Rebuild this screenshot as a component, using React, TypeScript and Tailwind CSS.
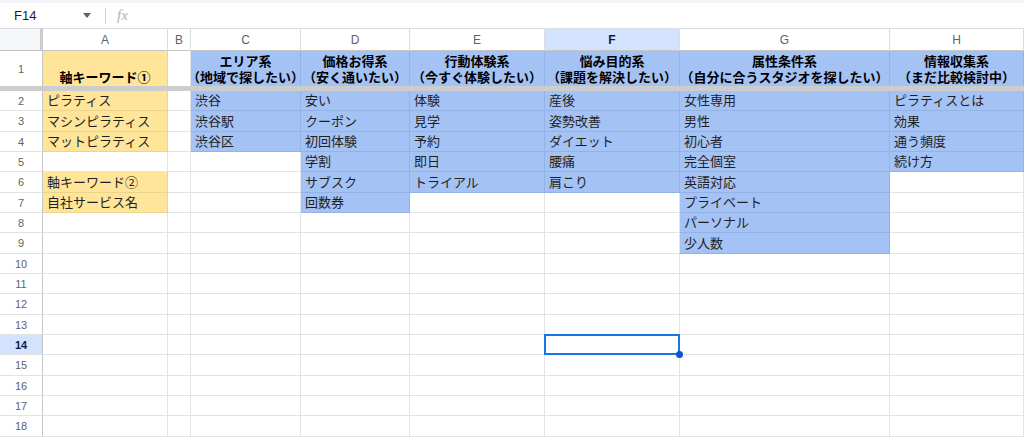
import React from "react";

type Fill = "none" | "yellow" | "blue";

const COLS = ["A", "B", "C", "D", "E", "F", "G", "H"];

// 1行目（見出し）
const HEAD: { lines: string[]; fill: Fill }[] = [
  { lines: ["軸キーワード①"], fill: "yellow" },
  { lines: [], fill: "none" },
  { lines: ["エリア系", "（地域で探したい）"], fill: "blue" },
  { lines: ["価格お得系", "（安く通いたい）"], fill: "blue" },
  { lines: ["行動体験系", "（今すぐ体験したい）"], fill: "blue" },
  { lines: ["悩み目的系", "（課題を解決したい）"], fill: "blue" },
  { lines: ["属性条件系", "（自分に合うスタジオを探したい）"], fill: "blue" },
  { lines: ["情報収集系", "（まだ比較検討中）"], fill: "blue" },
];

// 2行目以降の列データ
const DATA: string[][] = [
  ["ピラティス", "マシンピラティス", "マットピラティス", "", "軸キーワード②", "自社サービス名"],
  [],
  ["渋谷", "渋谷駅", "渋谷区"],
  ["安い", "クーポン", "初回体験", "学割", "サブスク", "回数券"],
  ["体験", "見学", "予約", "即日", "トライアル"],
  ["産後", "姿勢改善", "ダイエット", "腰痛", "肩こり"],
  ["女性専用", "男性", "初心者", "完全個室", "英語対応", "プライベート", "パーソナル", "少人数"],
  ["ピラティスとは", "効果", "通う頻度", "続け方"],
];

const ROW_H = [20, 21, 20, 20, 21, 20, 20, 21, 20, 20, 21, 20, 20, 21, 20, 20, 21];

const GRID = "grid grid-rows-[100%] grid-cols-[43px_125px_23px_110px_109px_135px_135px_210px_134px]";
const FONT = "font-['Liberation_Sans','Noto_Sans_CJK_JP',sans-serif]";

function fillClass(f: Fill) {
  if (f === "yellow") return "bg-[#ffe599] border-[#ecd48c]";
  if (f === "blue") return "bg-[#a4c2f4] border-[#93b2e6]";
  return "bg-white border-[#e2e3e3]";
}

function cellFill(col: number, row: number): Fill {
  const v = DATA[col][row];
  if (v === undefined || v === "") return "none";
  return col === 0 ? "yellow" : "blue";
}

function FormulaBar() {
  return (
    <div className="border-b border-[#dadce0] bg-white">
      <div className="h-[3px] bg-[#f3f4f6]" />
      <div className="flex h-[25px] items-center">
        <div className="w-[74px] pl-[14px] text-[13px] text-[#1f1f1f]">F14</div>
        <svg width="8" height="5" viewBox="0 0 8 5" className="ml-[9px]">
          <path d="M0 0 L8 0 L4 5 Z" fill="#5f6368" />
        </svg>
        <div className="ml-[14px] h-[16px] w-px bg-[#d0d3d6]" />
        <span className="ml-[11px] font-['Liberation_Serif',serif] text-[15px] italic text-[#b0b3b6]">fx</span>
      </div>
    </div>
  );
}

function ColumnHeader() {
  return (
    <div className={`${GRID} h-[22px]`}>
      <div className="border-b border-r-[3px] border-b-[#c4c7c5] border-r-[#c9cbcc] bg-[#f6f7f8]" />
      {COLS.map((c) => {
        const sel = c === "F";
        return (
          <div
            key={c}
            className={`flex items-center justify-center border-b border-r border-b-[#c4c7c5] border-r-[#dadce0] text-[12px] leading-[16px] ${
              sel ? "bg-[#d3e3fd] font-bold text-[#041e49]" : "bg-white text-[#5f6368]"
            }`}
          >
            {c}
          </div>
        );
      })}
    </div>
  );
}

function HeadRow() {
  return (
    <div className={`${GRID} h-[35px]`}>
      <div className="flex items-center justify-center border-r border-[#c4c7c5] bg-white text-[11px] leading-[16px] text-[#5f6368]">
        1
      </div>
      {HEAD.map((h, i) => (
        <div
          key={i}
          className={`flex flex-col items-center justify-end whitespace-nowrap border-r text-[13px] font-bold leading-[16px] text-black ${fillClass(h.fill)}`}
        >
          {h.lines.map((l) => (
            <div key={l}>{l}</div>
          ))}
        </div>
      ))}
    </div>
  );
}

function DataRow({ r }: { r: number }) {
  const num = r + 2;
  const sel = num === 14;
  const h = ROW_H[r] === 21 ? "h-[21px]" : "h-[20px]";
  return (
    <div className={`${GRID} ${h}`}>
      <div
        className={`flex items-center justify-center border-b border-r border-b-[#e2e3e3] border-r-[#c4c7c5] text-[11px] leading-[16px] ${
          sel ? "bg-[#d3e3fd] font-bold text-[#041e49]" : "bg-white text-[#5f6368]"
        }`}
      >
        {num}
      </div>
      {COLS.map((c, ci) => {
        const v = DATA[ci][r] ?? "";
        const active = c === "F" && sel;
        return (
          <div
            key={c}
            className={`relative flex items-center overflow-visible whitespace-nowrap border-b border-r pl-[4px] text-[13px] leading-[17px] text-[#1f1f1f] ${fillClass(
              cellFill(ci, r)
            )}`}
          >
            {v}
            {active && (
              <>
                <div className="absolute -bottom-px -left-px -right-px -top-px z-10 border-2 border-[#1a73e8]" />
                <div className="absolute -bottom-[4px] -right-[4px] z-20 h-[7px] w-[7px] rounded-full bg-[#0b57d0]" />
              </>
            )}
          </div>
        );
      })}
    </div>
  );
}

export default function App() {
  return (
    <div className={`h-[437px] w-[1024px] overflow-hidden bg-white ${FONT}`}>
      <FormulaBar />
      <ColumnHeader />
      <HeadRow />
      {/* 固定行の境界 */}
      <div className="h-[5px] bg-[#cdcdcd]" />
      {ROW_H.map((_, r) => (
        <DataRow key={r} r={r} />
      ))}
    </div>
  );
}
